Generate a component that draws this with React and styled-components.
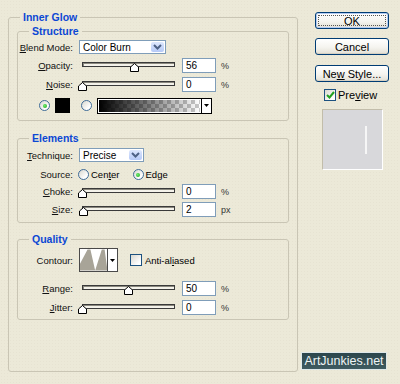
import React from 'react';
import styled, { createGlobalStyle } from 'styled-components';

const GlobalStyle = createGlobalStyle`
  html, body {
    margin: 0;
    padding: 0;
  }
  body {
    background: #ece9d8;
    font-family: "Liberation Sans", Arial, sans-serif;
    color: #000;
  }
`;

const Page = styled.div`
  position: relative;
  width: 400px;
  height: 384px;
  box-sizing: border-box;
  padding: 11px 0 0 8px;
  display: flex;
  align-items: flex-start;
  overflow: hidden;
  background-color: #ece9d8;
  background-image: radial-gradient(rgba(110, 100, 70, 0.045) 0.6px, transparent 0.8px);
  background-size: 3px 3px;
`;

const Group = styled.fieldset`
  box-sizing: border-box;
  min-width: 0;
  width: ${p => (p.$w ? `${p.$w}px` : 'auto')};
  margin: ${p => p.$mt || 0}px ${p => p.$mx || 0}px 0;
  padding: ${p => p.$pt || 0}px 0 ${p => p.$pb || 0}px;
  border: 1px solid #c9c5b4;
  border-radius: 3px;
`;

const Legend = styled.legend`
  margin-left: 11px;
  padding: 0 3px;
  font: bold 10.5px/12px "Liberation Sans", Arial, sans-serif;
  color: #0b47d4;
`;

const Row = styled.div`
  display: flex;
  align-items: center;
  height: ${p => p.$h || 17}px;
  margin-top: ${p => p.$mt || 0}px;
  padding-left: ${p => p.$pl || 0}px;
`;

const Label = styled.span`
  width: 55px;
  margin-right: ${p => (p.$gap !== undefined ? p.$gap : 6)}px;
  text-align: right;
  font-size: 9.5px;
  color: #111;
  white-space: nowrap;
`;

const Text = styled.span`
  font-size: ${p => p.$size || 9.5}px;
  margin-left: ${p => p.$ml || 0}px;
  white-space: nowrap;
`;

const Unit = styled.span`
  margin-left: 5px;
  font-size: 9px;
  color: #333;
`;

const Select = styled.div`
  box-sizing: border-box;
  width: ${p => p.$w}px;
  height: 14px;
  border: 1px solid #7f9db9;
  background: #fff;
  display: flex;
  align-items: center;
  justify-content: space-between;
  padding: 0 1px 0 3px;
  font-size: 10px;
`;

const SelectBtn = styled.span`
  width: 13px;
  height: 10px;
  border-radius: 2px;
  background: linear-gradient(#dde7fd, #b5c9f7);
  display: flex;
  align-items: center;
  justify-content: center;
`;

const SliderBox = styled.div`
  position: relative;
  width: 93px;
  height: 17px;
  margin: 0 3px;
  display: flex;
  align-items: center;
`;

const Track = styled.div`
  box-sizing: border-box;
  width: 100%;
  height: 5px;
  margin-top: -2px;
  border: 1px solid #3a3a3a;
  background: #f4f2ea;
  box-shadow: inset 1px 1px 0 #8a887e;
`;

const Thumb = styled.svg`
  position: absolute;
  top: 6px;
  margin-left: -4.5px;
`;

const NumInput = styled.div`
  box-sizing: border-box;
  width: 34px;
  height: 15px;
  margin-left: 4px;
  border: 1px solid #7f9db9;
  background: #fff;
  font-size: 10px;
  line-height: 13px;
  padding-left: 3px;
`;

const RadioDot = styled.span`
  box-sizing: border-box;
  width: 11px;
  height: 11px;
  flex: none;
  margin-left: ${p => p.$ml || 0}px;
  border-radius: 50%;
  border: 1px solid #3f6c98;
  background: linear-gradient(135deg, #d8d7cf, #fff 75%);
  display: inline-flex;
  align-items: center;
  justify-content: center;

  &::after {
    content: "";
    width: 4px;
    height: 4px;
    border-radius: 50%;
    background: ${p => (p.$on ? 'radial-gradient(circle at 40% 40%, #6cf06c, #1e9c1e)' : 'transparent')};
  }
`;

const Check = styled.span`
  box-sizing: border-box;
  width: 12px;
  height: 12px;
  flex: none;
  margin-left: ${p => p.$ml || 0}px;
  border: 1px solid #1c5180;
  background: linear-gradient(135deg, #d8d7cf, #fff 80%);
  display: inline-flex;
  align-items: center;
  justify-content: center;
`;

const Swatch = styled.span`
  width: 15px;
  height: 15px;
  margin-left: 5px;
  background: #000;
`;

const Gradient = styled.div`
  box-sizing: border-box;
  width: 115px;
  height: 16px;
  margin-left: 5px;
  border: 1px solid #000;
  display: flex;
`;

const GradientFill = styled.span`
  flex: 1;
  border: 1px solid #fff;
  background:
    linear-gradient(to right, #000, rgba(0, 0, 0, 0)),
    conic-gradient(#c8c8c8 25%, #fff 0 50%, #c8c8c8 0 75%, #fff 0);
  background-size: 100% 100%, 8px 8px;
`;

const DropArrow = styled.span`
  width: ${p => p.$w || 9}px;
  border-left: 1px solid ${p => p.$line || '#000'};
  background: #fff;
  display: flex;
  align-items: center;
  justify-content: center;
`;

const Contour = styled.div`
  box-sizing: border-box;
  width: 39px;
  height: 24px;
  border: 1px solid #4a4a4a;
  background: #fff;
  display: flex;
`;

const Side = styled.div`
  margin-left: 17px;
  padding-top: 1px;
  display: flex;
  flex-direction: column;
`;

const Button = styled.div`
  box-sizing: border-box;
  width: 74px;
  height: 17px;
  margin-top: ${p => p.$mt || 0}px;
  border: 1px solid #003c74;
  border-radius: 3px;
  background: linear-gradient(#fff, #f5f4ef 55%, #e3e0d5);
  box-shadow: ${p => (p.$default ? 'inset 0 0 0 1px #b3cbf3' : 'inset 0 -1px 0 #d6d0c2')};
  display: flex;
  align-items: center;
  justify-content: center;
  font-size: 11px;
  white-space: pre;
  outline: ${p => (p.$default ? '1px dotted #555' : 'none')};
  outline-offset: -4px;
`;

const PreviewRow = styled.div`
  display: flex;
  align-items: center;
  margin: 7px 0 0 9px;
  height: 12px;
`;

const PreviewBox = styled.div`
  box-sizing: border-box;
  width: 61px;
  height: 61px;
  margin: 8px 0 0 7px;
  padding: 16px 15px 0 0;
  border: 1px solid;
  border-color: #c2bdaa #fff #fff #c2bdaa;
  background: #d8d8db;
  display: flex;
  justify-content: flex-end;
  align-items: flex-start;
`;

const PreviewLine = styled.span`
  width: 2px;
  height: 28px;
  background: #f6f6f6;
`;

const Watermark = styled.div`
  position: absolute;
  left: 301px;
  top: 352px;
  box-sizing: border-box;
  width: 86px;
  height: 18px;
  border: 1px solid #dfe8ea;
  background: linear-gradient(#2c464c, #3f5b61);
  color: #eef4f5;
  font-size: 12.5px;
  display: flex;
  align-items: center;
  justify-content: center;
`;

const Chevron = () => (
  <svg width="9" height="6" viewBox="0 0 9 6">
    <path d="M1 1 L4.5 4.5 L8 1" fill="none" stroke="#4d6185" strokeWidth="2" />
  </svg>
);

const Tri = () => (
  <svg width="5" height="3" viewBox="0 0 5 3">
    <path d="M0 0 H5 L2.5 3 Z" fill="#000" />
  </svg>
);

const Tick = () => (
  <svg width="9" height="8" viewBox="0 0 9 8">
    <path d="M1 4 L3.5 6.5 L8 1" fill="none" stroke="#21a121" strokeWidth="2" />
  </svg>
);

function Slider({ value }) {
  return (
    <SliderBox>
      <Track />
      <Thumb width="9" height="9" viewBox="0 0 9 9" style={{ left: `${value}%` }}>
        <path d="M4.5 0.5 L8.5 4 L8.5 8.5 L0.5 8.5 L0.5 4 Z" fill="#fff" stroke="#000" />
      </Thumb>
    </SliderBox>
  );
}

function SliderRow({ label, mt, value, unit = '%' }) {
  return (
    <Row $mt={mt}>
      <Label>{label}</Label>
      <Slider value={value} />
      <NumInput>{value}</NumInput>
      <Unit>{unit}</Unit>
    </Row>
  );
}

export default function App() {
  return (
    <Page>
      <GlobalStyle />
      <Group $w={290} $pt={2} $pb={51}>
        <Legend>Inner Glow</Legend>

        <Group $mx={8} $pb={6}>
          <Legend>Structure</Legend>
          <Row $h={14} $mt={3}>
            <Label><u>B</u>lend Mode:</Label>
            <Select $w={87}>
              <span>Color Burn</span>
              <SelectBtn><Chevron /></SelectBtn>
            </Select>
          </Row>
          <SliderRow label={<><u>O</u>pacity:</>} mt={3} value={56} />
          <SliderRow label={<><u>N</u>oise:</>} mt={2} value={0} />
          <Row $mt={4} $pl={21}>
            <RadioDot $on />
            <Swatch />
            <RadioDot $ml={11} />
            <Gradient>
              <GradientFill />
              <DropArrow><Tri /></DropArrow>
            </Gradient>
          </Row>
        </Group>

        <Group $mx={8} $mt={11} $pb={4}>
          <Legend>Elements</Legend>
          <Row $h={14} $mt={4}>
            <Label><u>T</u>echnique:</Label>
            <Select $w={65}>
              <span>Precise</span>
              <SelectBtn><Chevron /></SelectBtn>
            </Select>
          </Row>
          <Row $h={15} $mt={5}>
            <Label $gap={5}>Source:</Label>
            <RadioDot />
            <Text $ml={2}>Cen<u>t</u>er</Text>
            <RadioDot $on $ml={13} />
            <Text $ml={2}>Edge</Text>
          </Row>
          <SliderRow label={<><u>C</u>hoke:</>} mt={1} value={0} />
          <SliderRow label={<><u>S</u>ize:</>} mt={1} value={2} unit="px" />
        </Group>

        <Group $mx={8} $mt={10} $pb={3}>
          <Legend>Quality</Legend>
          <Row $h={24} $mt={3}>
            <Label>Contour:</Label>
            <Contour>
              <svg width="29" height="22" viewBox="0 0 29 22">
                <path d="M0 22 L0 15 L8 0 L11 0 L16 22 Z M16 22 L23 0 L26 0 L29 22 Z" fill="#a8a498" />
              </svg>
              <DropArrow $w={9} $line="#4a4a4a"><Tri /></DropArrow>
            </Contour>
            <Check $ml={12} />
            <Text $ml={3}>Anti-al<u>i</u>ased</Text>
          </Row>
          <SliderRow label={<><u>R</u>ange:</>} mt={8} value={50} />
          <SliderRow label={<><u>J</u>itter:</>} mt={2} value={0} />
        </Group>
      </Group>

      <Side>
        <Button $default>OK</Button>
        <Button $mt={9}>Cancel</Button>
        <Button $mt={10}><span>Ne<u>w</u> Style...</span></Button>
        <PreviewRow>
          <Check><Tick /></Check>
          <Text $size={11} $ml={2}>Pre<u>v</u>iew</Text>
        </PreviewRow>
        <PreviewBox>
          <PreviewLine />
        </PreviewBox>
      </Side>

      <Watermark>ArtJunkies.net</Watermark>
    </Page>
  );
}
